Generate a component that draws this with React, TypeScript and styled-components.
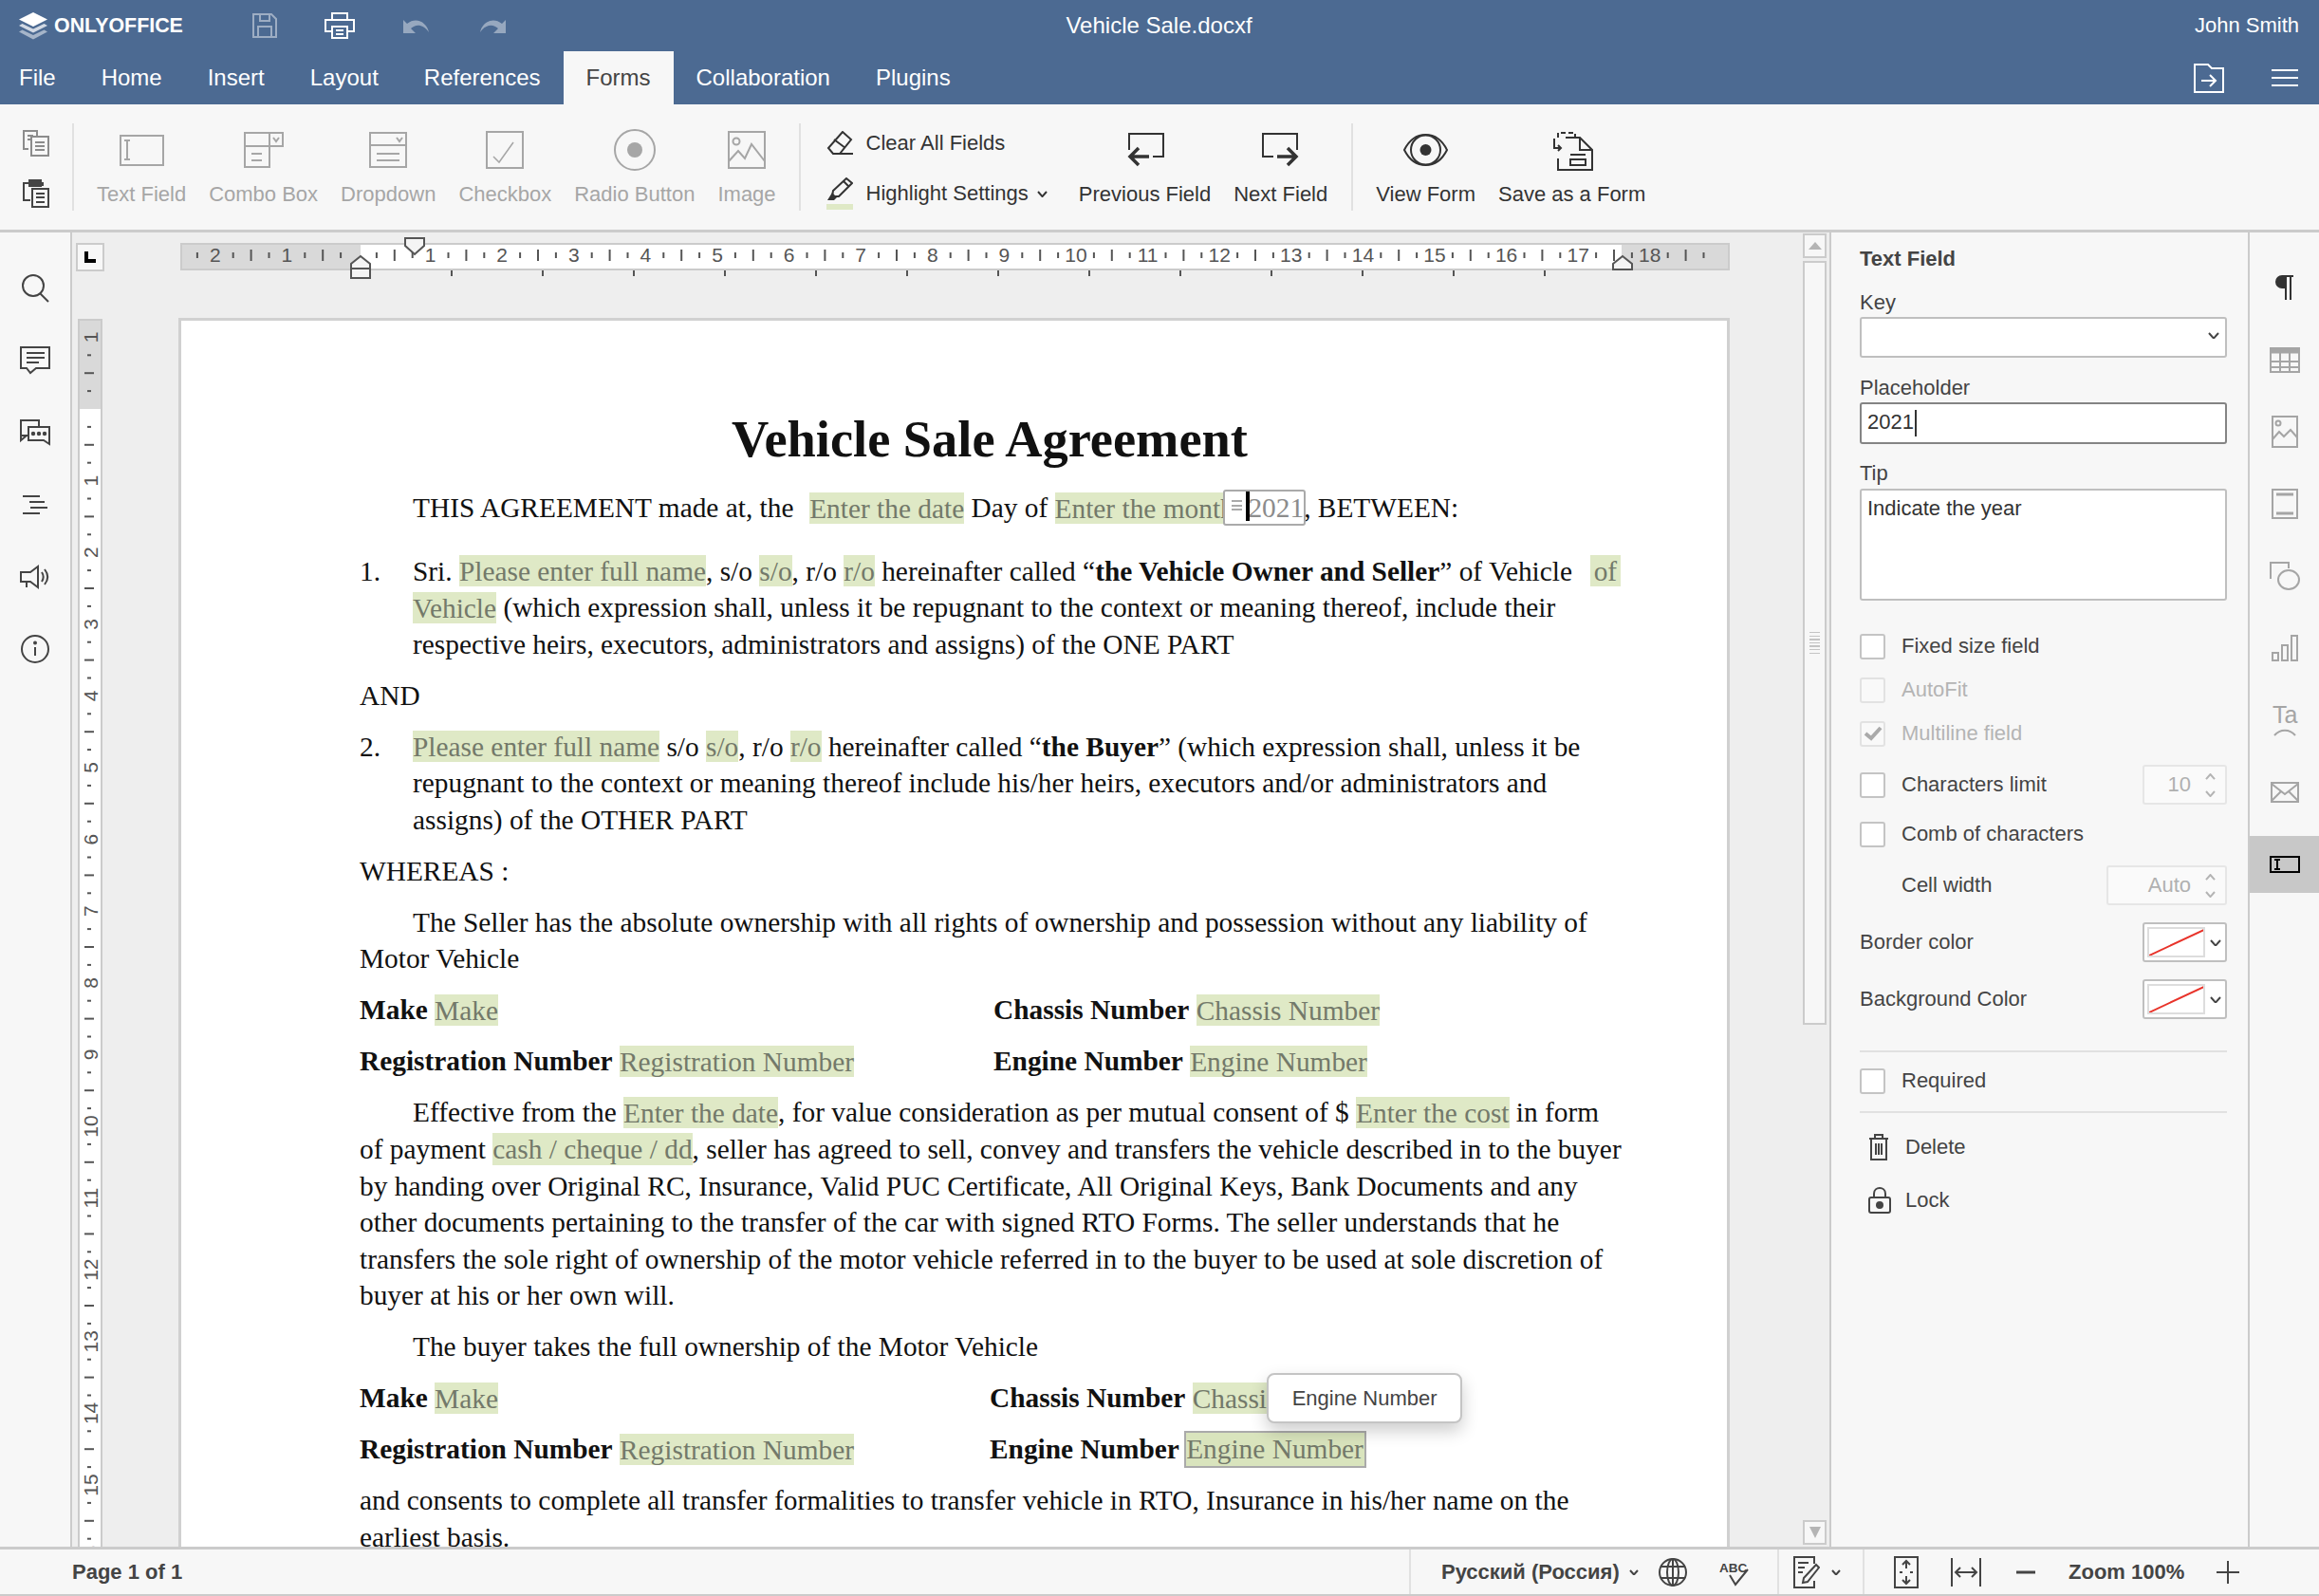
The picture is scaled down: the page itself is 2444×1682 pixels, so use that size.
import React from "react";
import styled, { createGlobalStyle } from "styled-components";

const GlobalStyle = createGlobalStyle`
  html, body { margin: 0; padding: 0; background: #f7f7f7; }
  body { font-family: "Liberation Sans", Arial, sans-serif; color: #444; }
  * { box-sizing: border-box; }
  svg { display: block; flex: none; }
`;

const Shell = styled.div`
  width: 2444px;
  height: 1682px;
  display: flex;
  flex-direction: column;
  overflow: hidden;
`;

/* ---- header ---- */

const TitleBar = styled.header`
  height: 54px;
  background: #4c6a92;
  color: #fff;
  display: grid;
  grid-template-columns: 1fr auto 1fr;
  align-items: center;
  padding: 0 21px 0 20px;
  font-size: 24px;
`;

const TitleLeft = styled.div`
  display: flex;
  align-items: center;
`;

const Brand = styled.span`
  font-weight: 700;
  font-size: 21.4px;
  margin: 0 26px 0 7px;
  width: 133px;
  white-space: nowrap;
`;

const QuickTools = styled.div`
  display: flex;
  align-items: center;
  margin-left: 50px;
  gap: 50px;
`;

const UserName = styled.div`
  justify-self: end;
  font-size: 22px;
`;

const TabBar = styled.nav`
  height: 56px;
  background: #4c6a92;
  display: flex;
  align-items: stretch;
  padding-left: 0;
`;

const Tab = styled.div<{ $active?: boolean }>`
  display: flex;
  align-items: center;
  padding: 0 24px;
  font-size: 24px;
  color: ${({ $active }) => ($active ? "#444" : "#fff")};
  background: ${({ $active }) => ($active ? "#f7f7f7" : "transparent")};
  &:first-child { padding-left: 20px; }
`;

const TabTools = styled.div`
  margin-left: auto;
  display: flex;
  align-items: center;
  gap: 50px;
  padding-right: 22px;
  color: #fff;
`;

/* ---- ribbon ---- */

const Ribbon = styled.section`
  height: 135px;
  flex: none;
  background: #f7f7f7;
  border-bottom: 3px solid #cbcbcb;
  display: flex;
  align-items: flex-start;
`;

const ClipColumn = styled.div`
  width: 76px;
  display: flex;
  flex-direction: column;
  align-items: center;
  gap: 24px;
  padding-top: 27px;
  color: #444;
`;

const RibbonSep = styled.div`
  width: 2px;
  height: 92px;
  margin-top: 20px;
  background: #e1e1e1;
`;

const RibbonGroup = styled.div<{ $pad: string; $gap: number }>`
  display: flex;
  padding: ${({ $pad }) => $pad};
  gap: ${({ $gap }) => $gap}px;
`;

const RibbonBtn = styled.div<{ $off?: boolean }>`
  display: flex;
  flex-direction: column;
  align-items: center;
  padding-top: 26px;
  color: ${({ $off }) => ($off ? "#a6a6a6" : "#333")};
`;

const RibbonIcon = styled.div`
  height: 44px;
  display: flex;
  align-items: center;
  justify-content: center;
`;

const RibbonLabel = styled.div`
  margin-top: 12px;
  font-size: 22px;
  line-height: 26px;
  white-space: nowrap;
`;

const StackColumn = styled.div`
  display: flex;
  flex-direction: column;
  padding-top: 26px;
  gap: 23px;
  margin-right: 9px;
`;

const StackRow = styled.div`
  display: flex;
  align-items: center;
  gap: 14px;
  font-size: 22px;
  height: 30px;
  color: #333;
  white-space: nowrap;
`;

const RowChevron = styled.div`
  margin-left: -5px;
`;

const IconCell = styled.div`
  width: 28px;
  display: flex;
  flex-direction: column;
  gap: 4px;
`;

const ColorStrip = styled.div`
  height: 6px;
  background: #dfe9c6;
`;

/* ---- workspace ---- */

const Workspace = styled.main`
  flex: 1;
  min-height: 0;
  display: flex;
`;

const Rail = styled.aside<{ $right?: boolean }>`
  flex: none;
  width: ${({ $right }) => ($right ? 75 : 76)}px;
  background: #f7f7f7;
  ${({ $right }) => ($right ? "border-left: 2px solid #cbcbcb;" : "border-right: 2px solid #cbcbcb;")}
  padding-top: ${({ $right }) => ($right ? 28 : 29)}px;
  display: flex;
  flex-direction: column;
`;

const RailBtn = styled.div<{ $active?: boolean; $dim?: boolean }>`
  height: 60px;
  margin-bottom: 16px;
  display: flex;
  align-items: center;
  justify-content: center;
  background: ${({ $active }) => ($active ? "#c8c8c8" : "transparent")};
  color: ${({ $dim }) => ($dim ? "#a5a5a5" : "#444")};
`;

const Canvas = styled.div`
  flex: 1;
  min-width: 0;
  background: #eee;
  display: grid;
  grid-template-columns: 112px 1635px 1fr;
  grid-template-rows: 90px minmax(0, 1fr);
  overflow: hidden;
`;

const Corner = styled.div`
  width: 30px;
  height: 30px;
  margin: 11px 0 0 4px;
  border: 2px solid #cbcbcb;
  background: #f7f7f7;
  display: flex;
  align-items: center;
  justify-content: center;
`;

const VRulerSlot = styled.div`
  padding: 1px 0 0 6px;
  overflow: hidden;
`;

const Page = styled.article`
  background: #fff;
  border: 3px solid #d0d0d0;
  border-bottom: 0;
  padding: 95px 113px 0 188px;
  font-family: "Liberation Serif", "Times New Roman", serif;
  font-size: 29.36px;
  line-height: 38.6px;
  color: #111;
  overflow: hidden;
  white-space: pre;
`;

const DocTitle = styled.h1`
  margin: 0 0 23.2px;
  font-size: 54.4px;
  line-height: 60px;
  font-weight: 700;
  text-align: center;
`;

const Para = styled.div<{ $after?: number }>`
  margin-bottom: ${({ $after }) => $after ?? 15.4}px;
`;

const Line = styled.div<{ $indent?: boolean }>`
  padding-left: ${({ $indent }) => ($indent ? 56 : 0)}px;
`;

const ListItem = styled.div`
  display: grid;
  grid-template-columns: 56px 1fr;
  margin-bottom: 15.4px;
`;

const FieldRow = styled.div<{ $col: number }>`
  display: grid;
  grid-template-columns: ${({ $col }) => $col}px 1fr;
  margin-bottom: 15.4px;
`;

const Ph = styled.span<{ $lead?: number; $pad?: number }>`
  background: #dfe9c6;
  color: #73796a;
  padding: 0.6px ${({ $pad }) => $pad ?? 0}px;
  margin-left: ${({ $lead }) => $lead ?? 0}px;
`;

const ActiveField = styled.span`
  position: relative;
`;

const ActiveFrame = styled.span`
  position: absolute;
  left: -26px;
  right: -2px;
  top: -3px;
  bottom: -3px;
  background: #fff;
  border: 2px solid #aaa;
  border-radius: 3px;
`;

const Grip = styled.span`
  position: absolute;
  left: 7px;
  top: 9px;
  width: 11px;
  height: 11px;
  background: repeating-linear-gradient(#aaa 0 2px, transparent 2px 4.5px);
`;

const ActiveText = styled.span`
  position: relative;
  color: #8c8c8c;
`;

const Caret = styled.span`
  position: absolute;
  left: -2px;
  top: -1px;
  bottom: 2px;
  width: 4px;
  background: #000;
`;

const SelectedField = styled.span`
  position: relative;
  background: #d9e4bd;
  color: #73796a;
  outline: 2px solid #aaa;
  padding: 1px 1px 2px 0;
`;

const Tip = styled.div`
  position: absolute;
  left: 85px;
  bottom: 100%;
  margin-bottom: 10px;
  height: 53px;
  padding: 0 24.5px;
  display: flex;
  align-items: center;
  background: #fff;
  border: 2px solid #c4c4c4;
  border-radius: 8px;
  box-shadow: 0 8px 18px rgba(0, 0, 0, 0.2);
  font-family: "Liberation Sans", Arial, sans-serif;
  font-size: 22px;
  color: #444;
`;

const ScrollColumn = styled.div`
  grid-column: 3;
  grid-row: 1 / span 2;
  width: 25px;
  margin-left: auto;
  margin-right: 3px;
  display: flex;
  flex-direction: column;
  padding: 1px 0 2px;
`;

const ScrollBtn = styled.div<{ $bottom?: boolean }>`
  height: 26px;
  flex: none;
  border: 2px solid #cbcbcb;
  background: #f7f7f7;
  display: flex;
  align-items: center;
  justify-content: center;
  margin-top: ${({ $bottom }) => ($bottom ? "auto" : "0")};
`;

const ScrollThumb = styled.div`
  height: 805px;
  margin-top: 3px;
  flex: none;
  border: 2px solid #cbcbcb;
  background: #f7f7f7;
  display: flex;
  align-items: center;
  justify-content: center;
`;

const ThumbGrip = styled.div`
  width: 11px;
  height: 24px;
  background: repeating-linear-gradient(#c4c4c4 0 1.5px, transparent 1.5px 3.6px);
`;

/* ---- settings panel ---- */

const Panel = styled.aside`
  flex: none;
  width: 441px;
  background: #f7f7f7;
  border-left: 2px solid #cbcbcb;
  padding: 15px 22px 0 30px;
  font-size: 22px;
  color: #444;
`;

const PanelTitle = styled.div`
  font-weight: 700;
  line-height: 26px;
`;

const FieldLabel = styled.div<{ $mt: number }>`
  margin-top: ${({ $mt }) => $mt}px;
  line-height: 26px;
`;

const TextBox = styled.div<{ $mt: number; $h: number; $focus?: boolean }>`
  margin-top: ${({ $mt }) => $mt}px;
  height: ${({ $h }) => $h}px;
  background: #fff;
  border: 2px solid ${({ $focus }) => ($focus ? "#848484" : "#bfbfbf")};
  border-radius: 3px;
  padding: 4px 6px;
  line-height: 30px;
  display: flex;
  align-items: flex-start;
  color: #333;
`;

const ComboChevron = styled.div`
  margin: 10px 0 0 auto;
  color: #444;
`;

const TextCaret = styled.span`
  width: 2px;
  height: 28px;
  margin: 2px 0 0 1px;
  background: #333;
`;

const CheckRow = styled.div<{ $mt: number; $h?: number; $off?: boolean }>`
  margin-top: ${({ $mt }) => $mt}px;
  height: ${({ $h }) => $h ?? 30}px;
  display: flex;
  align-items: center;
  color: ${({ $off }) => ($off ? "#b4b4b4" : "#444")};
`;

const CheckBox = styled.div<{ $off?: boolean }>`
  width: 27px;
  height: 27px;
  flex: none;
  margin-right: 17px;
  border: 2px solid ${({ $off }) => ($off ? "#e2e2e2" : "#c4c4c4")};
  border-radius: 3px;
  background: ${({ $off }) => ($off ? "#f9f9f9" : "#fff")};
  display: flex;
  align-items: center;
  justify-content: center;
`;

const LabelIndent = styled.span`
  padding-left: 44px;
`;

const SpinBox = styled.div<{ $w: number }>`
  margin-left: auto;
  width: ${({ $w }) => $w}px;
  height: 42px;
  border: 2px solid #e6e6e6;
  border-radius: 3px;
  background: #fafafa;
  color: #b0b0b0;
  display: flex;
  align-items: center;
  justify-content: flex-end;
  gap: 15px;
  padding-right: 10px;
`;

const SpinArrows = styled.div`
  display: flex;
  flex-direction: column;
  gap: 11px;
  color: #b4b4b4;
`;

const ColorRow = styled.div<{ $mt: number }>`
  margin-top: ${({ $mt }) => $mt}px;
  height: 42px;
  display: flex;
  align-items: center;
  justify-content: space-between;
`;

const ColorBtn = styled.div`
  width: 89px;
  height: 42px;
  border: 2px solid #bfbfbf;
  border-radius: 3px;
  background: #fff;
  padding: 3px 0 3px 3px;
  display: flex;
  align-items: center;
  gap: 5px;
`;

const Swatch = styled.div`
  width: 61px;
  height: 32px;
  border: 2px solid #ddd;
  flex: none;
  overflow: visible;
`;

const PanelRule = styled.div<{ $mt: number }>`
  margin-top: ${({ $mt }) => $mt}px;
  height: 2px;
  background: #e1e1e1;
`;

const ActionRow = styled.div<{ $mt: number }>`
  margin-top: ${({ $mt }) => $mt}px;
  height: 36px;
  display: flex;
  align-items: center;
  color: #444;
`;

const ActionIcon = styled.div`
  width: 48px;
  padding-left: 9px;
`;

/* ---- status bar ---- */

const StatusBar = styled.footer`
  height: 52px;
  flex: none;
  background: #f7f7f7;
  border-top: 3px solid #cbcbcb;
  border-bottom: 2px solid #cbcbcb;
  display: flex;
  align-items: stretch;
  font-size: 22px;
  font-weight: 700;
  color: #444;
`;

const PageCount = styled.div`
  width: 1485px;
  padding-left: 76px;
  display: flex;
  align-items: center;
`;

const StatusSection = styled.div<{ $w: number; $pad: number }>`
  width: ${({ $w }) => $w}px;
  padding-left: ${({ $pad }) => $pad}px;
  border-left: 2px solid #e1e1e1;
  display: flex;
  align-items: center;
  white-space: nowrap;
`;

const StatusItem = styled.div<{ $ml: number }>`
  margin-left: ${({ $ml }) => $ml}px;
`;

/* ---- drawings ---- */

const Ico: React.FC<{ w: number; h: number; sw?: number; children: React.ReactNode }> = ({ w, h, sw = 2, children }) => (
  <svg width={w} height={h} viewBox={`0 0 ${w} ${h}`} fill="none" stroke="currentColor" strokeWidth={sw}>
    {children}
  </svg>
);

const Chevron: React.FC<{ w?: number; up?: boolean; sw?: number }> = ({ w = 12, up, sw = 2 }) => (
  <Ico w={w} h={Math.round(w * 0.6)} sw={sw}>
    <path d={up ? `M1 ${w * 0.55} L${w / 2} 1 L${w - 1} ${w * 0.55}` : `M1 1 L${w / 2} ${w * 0.55} L${w - 1} 1`} />
  </Ico>
);

const LogoIcon = () => (
  <svg width="30" height="29" viewBox="0 0 30 29">
    <path d="M15 0 L30 7.5 L15 15 L0 7.5Z" fill="#fff" />
    <path d="M3.5 12 L0 14 L15 21.5 L30 14 L26.5 12 L15 17.5Z" fill="#fff" opacity=".75" />
    <path d="M3.5 18.5 L0 20.5 L15 28.5 L30 20.5 L26.5 18.5 L15 24Z" fill="#fff" opacity=".5" />
  </svg>
);

const SaveIcon = () => (
  <Ico w={26} h={26} sw={2}>
    <g opacity=".45">
      <path d="M1 1 H20 L25 6 V25 H1Z" />
      <path d="M6 25 V14 H20 V25 M8 1 V8 H18 V1" />
    </g>
  </Ico>
);

const PrintIcon = () => (
  <Ico w={32} h={28} sw={2}>
    <path d="M8 8 V1 H24 V8 M7 20 H1 V8 H31 V20 H25" />
    <path d="M8 15 H24 V27 H8Z M12 19 H20 M12 23 H20" />
  </Ico>
);

const UndoIcon: React.FC<{ flip?: boolean }> = ({ flip }) => (
  <svg width="30" height="16" viewBox="0 0 30 16" style={flip ? { transform: "scaleX(-1)" } : undefined}>
    <path d="M1 2 V16 H14 L9 11 C14 6 22 6 28 15 C26 5 15 -2 5 6Z" fill="#fff" opacity=".42" />
  </svg>
);

const OpenIcon = () => (
  <Ico w={32} h={32} sw={2}>
    <path d="M1 2 H15 L19 6 H31 V31 H1Z" />
    <path d="M8 19 H23 M17 13 L23 19 L17 25" />
  </Ico>
);

const BurgerIcon = () => (
  <Ico w={28} h={20} sw={2}>
    <path d="M0 2 H28 M0 10 H28 M0 18 H28" />
  </Ico>
);

const CopyIcon = () => (
  <Ico w={28} h={28} sw={2}>
    <g stroke="#8c8c8c">
      <path d="M6 20 H1 V1 H15 V6" />
      <path d="M5 6 H11 M5 10 H8" />
      <path d="M9 7 H27 V27 H9Z M13 13 H23 M13 17 H23 M13 21 H23" />
    </g>
  </Ico>
);

const PasteIcon = () => (
  <Ico w={28} h={30} sw={2}>
    <path d="M8 22 H1 V4 H7 M21 7 V4 H19" />
    <path d="M7 1 H19 V7 H7Z" fill="currentColor" />
    <path d="M10 10 H27 V29 H10Z M14 15 H23 M14 19 H23 M14 24 H23" />
  </Ico>
);

const TextFieldIcon = () => (
  <Ico w={47} h={33}>
    <rect x="1" y="1" width="45" height="31" />
    <path d="M5 6 H11 M8 6 V26 M5 26 H11" />
  </Ico>
);

const ComboIcon = () => (
  <Ico w={42} h={38}>
    <path d="M1 1 H41 V15 H27 V37 H1Z M1 15 H27 M27 1 V15" />
    <path d="M31 6 L34 10 L37 6" />
    <path d="M8 23 H19 M8 30 H19" />
  </Ico>
);

const DropdownIcon = () => (
  <Ico w={40} h={38}>
    <rect x="1" y="1" width="38" height="36" />
    <path d="M1 14 H39 M29 6 L32 10 L35 6" />
    <path d="M8 23 H32 M8 30 H32" />
  </Ico>
);

const CheckIcon = () => (
  <Ico w={40} h={40}>
    <rect x="1" y="1" width="38" height="38" />
    <path d="M8 27 L14 33 L29 12" strokeWidth="1.5" />
  </Ico>
);

const RadioIcon = () => (
  <Ico w={44} h={44}>
    <circle cx="22" cy="22" r="21" />
    <circle cx="22" cy="22" r="8" fill="currentColor" stroke="none" />
  </Ico>
);

const ImageIcon = () => (
  <Ico w={40} h={40}>
    <rect x="1" y="1" width="38" height="38" />
    <circle cx="9" cy="11" r="3.5" />
    <path d="M1 32 L11 21 L18 29 L25 14 L39 32" />
  </Ico>
);

const EraserIcon = () => (
  <Ico w={28} h={26} sw={2}>
    <path d="M17 1 L26 9 L14 24 H7 L2 18Z M8 9 L20 18 M7 24 H28" />
  </Ico>
);

const MarkerIcon = () => (
  <Ico w={28} h={24} sw={2}>
    <path d="M21 1 L27 6 L13 20 L6 20 L7 14Z M18 4 L24 10" />
    <path d="M1 24 L6 16 L11 21 L8 24Z" fill="currentColor" stroke="none" />
  </Ico>
);

const PrevIcon: React.FC<{ flip?: boolean }> = ({ flip }) => (
  <svg width="40" height="36" viewBox="0 0 40 36" fill="none" stroke="currentColor" strokeWidth="2" style={flip ? { transform: "scaleX(-1)" } : undefined}>
    <path d="M3 18 V1 H39 V25 H28" />
    <path d="M24 25 H6 M13 16 L4 25 L13 34" strokeWidth="3.5" />
  </svg>
);

const EyeIcon = () => (
  <Ico w={47} h={34}>
    <path d="M1 17 C6 7 13 1 23.5 1 C34 1 41 7 46 17 C41 27 34 33 23.5 33 C13 33 6 27 1 17Z" />
    <circle cx="23.5" cy="17" r="15.5" />
    <circle cx="23.5" cy="17" r="6" fill="currentColor" stroke="none" />
  </Ico>
);

const SaveFormIcon = () => (
  <Ico w={45} h={44}>
    <path d="M16 9 H31 L44 22 V43 H8 V31" />
    <path d="M31 9 V22 H44" />
    <path d="M8 9 V4 H26 V9" strokeDasharray="5 3" />
    <path d="M4 10 V20 H11 M8 17 L11 20 L8 23" />
    <rect x="21" y="32" width="16" height="6" />
    <path d="M21 27 H37" />
  </Ico>
);

const SearchIcon = () => (
  <Ico w={30} h={30} sw={2}>
    <circle cx="13" cy="12" r="11" />
    <path d="M20 20 L29 29" />
  </Ico>
);

const CommentIcon = () => (
  <Ico w={32} h={30} sw={2}>
    <path d="M1 1 H31 V23 H17 L11 28 L7 23 H1Z" />
    <path d="M7 7 H26 M7 12 H26 M7 17 H20" />
  </Ico>
);

const ChatIcon = () => (
  <Ico w={32} h={28} sw={2}>
    <path d="M8 17 H1 V1 H20 V8" />
    <path d="M1 17 V22 L7 17" />
    <path d="M9 8 H31 V26 L25 22 H9Z" />
    <circle cx="14" cy="15" r="1.2" fill="currentColor" />
    <circle cx="20" cy="15" r="1.2" fill="currentColor" />
    <circle cx="26" cy="15" r="1.2" fill="currentColor" />
  </Ico>
);

const NavIcon = () => (
  <Ico w={28} h={22} sw={2}>
    <path d="M1 2 H19 M8 8 H24 M9 14 H27 M1 20 H19" />
  </Ico>
);

const SpeakerIcon = () => (
  <Ico w={32} h={26} sw={2}>
    <path d="M1 8 H11 L19 2 V24 L11 18 H1Z M7 18 V24" />
    <path d="M23 8 C25 11 25 15 23 18 M26 5 C30 10 30 16 26 21" />
  </Ico>
);

const InfoIcon = () => (
  <Ico w={30} h={30} sw={2}>
    <circle cx="15" cy="15" r="14" />
    <path d="M15 13 V22" />
    <circle cx="15" cy="8.5" r="1" fill="currentColor" />
  </Ico>
);

const ParaIcon = () => (
  <svg width="20" height="26" viewBox="0 0 20 26">
    <path d="M7 0 H19 V2 H17 V26 H15 V2 H12 V26 H10 V14 H7 A7 7 0 0 1 7 0Z" fill="#333" />
  </svg>
);

const TableIcon = () => (
  <Ico w={32} h={27} sw={2}>
    <rect x="1" y="1" width="30" height="25" />
    <path d="M1 4 H31" strokeWidth="5" />
    <path d="M1 15 H31 M1 21 H31 M11 6 V26 M21 6 V26" />
  </Ico>
);

const RailImageIcon = () => (
  <Ico w={28} h={34} sw={2}>
    <rect x="1" y="1" width="26" height="32" />
    <circle cx="7" cy="8" r="2.5" />
    <path d="M1 25 L8 17 L13 22 L20 15 L27 23" />
  </Ico>
);

const HeaderIcon = () => (
  <Ico w={28} h={32} sw={2}>
    <rect x="1" y="1" width="26" height="30" />
    <path d="M5 6 H23 M5 26 H23" strokeWidth="3" />
  </Ico>
);

const ShapeIcon = () => (
  <Ico w={32} h={30} sw={2}>
    <path d="M1 18 V1 H20 V7" />
    <ellipse cx="20" cy="19" rx="11" ry="10" />
  </Ico>
);

const ChartIcon = () => (
  <Ico w={28} h={28} sw={2}>
    <rect x="1" y="19" width="6" height="8" />
    <rect x="11" y="11" width="6" height="16" />
    <rect x="21" y="1" width="6" height="26" />
  </Ico>
);

const ArtIcon = () => (
  <svg width="30" height="34" viewBox="0 0 30 34">
    <text x="2" y="20" fontFamily="Liberation Sans" fontSize="25" fill="#a5a5a5">Ta</text>
    <path d="M4 33 C10 26 20 26 26 33" fill="none" stroke="#a5a5a5" strokeWidth="2" />
  </svg>
);

const MailIcon = () => (
  <Ico w={30} h={22} sw={2}>
    <rect x="1" y="1" width="28" height="20" />
    <path d="M1 2 L15 13 L29 2 M1 20 L11 10 M29 20 L19 10" />
  </Ico>
);

const FieldIcon = () => (
  <svg width="32" height="18" viewBox="0 0 32 18" fill="none" stroke="#000" strokeWidth="2">
    <rect x="1" y="1" width="30" height="16" />
    <path d="M5 4 H11 M8 4 V14 M5 14 H11" strokeWidth="2" />
  </svg>
);

const CheckMark = () => (
  <svg width="20" height="16" viewBox="0 0 20 16" fill="none" stroke="#aaa" strokeWidth="4">
    <path d="M2 8 L8 13 L18 2" />
  </svg>
);

const NoColor = () => (
  <svg width="57" height="28" viewBox="0 0 57 28">
    <path d="M0 28 L60 0" stroke="#e8332a" strokeWidth="2" />
  </svg>
);

const TrashIcon = () => (
  <Ico w={22} h={28} sw={2}>
    <path d="M1 5 H21 M7 5 V1 H15 V5 M3 5 V27 H19 V5 M8 10 V22 M11 10 V22 M14 10 V22" />
  </Ico>
);

const LockIcon = () => (
  <Ico w={24} h={28} sw={2}>
    <rect x="1" y="11" width="22" height="16" rx="2" />
    <path d="M6 11 V7 C6 -1 18 -1 18 7 V11" />
    <circle cx="12" cy="19" r="3" fill="currentColor" />
  </Ico>
);

const TriUp = () => (
  <svg width="14" height="8" viewBox="0 0 14 8"><path d="M7 0 L14 8 H0Z" fill="#b4b4b4" /></svg>
);

const TriDown = () => (
  <svg width="12" height="12" viewBox="0 0 12 12"><path d="M0 0 H12 L6 12Z" fill="#b4b4b4" /></svg>
);

const LCorner = () => (
  <svg width="12" height="12" viewBox="0 0 12 12"><path d="M0 0 H4 V8 H12 V12 H0Z" fill="#000" /></svg>
);

const GlobeIcon = () => (
  <Ico w={30} h={30} sw={2}>
    <circle cx="15" cy="15" r="14" />
    <ellipse cx="15" cy="15" rx="6" ry="14" />
    <path d="M15 1 V29 M2 9 H28 M2 21 H28" />
  </Ico>
);

const SpellIcon = () => (
  <svg width="32" height="30" viewBox="0 0 32 30">
    <text x="0" y="15" fontFamily="Liberation Sans" fontSize="13.5" fontWeight="700" fill="#444">ABC</text>
    <path d="M11 18 L17 28 L30 12" fill="none" stroke="#444" strokeWidth="2" />
  </svg>
);

const TrackIcon = () => (
  <Ico w={28} h={34} sw={2}>
    <path d="M22 8 V1 H1 V33 H22 V26" />
    <path d="M5 7 H16 M5 12 H12 M5 17 H10" />
    <path d="M24 9 L27 12 L15 27 L10 28 L11 23Z" />
  </Ico>
);

const FitPageIcon = () => (
  <Ico w={26} h={34} sw={2}>
    <rect x="1" y="1" width="24" height="32" />
    <path d="M13 6 V13 M9 9 L13 5 L17 9 M13 21 V28 M9 25 L13 29 L17 25 M6 17 H9 M17 17 H20" />
  </Ico>
);

const FitWidthIcon = () => (
  <Ico w={32} h={30} sw={2}>
    <path d="M1 0 V30 M31 0 V30 M5 15 H27 M10 10 L5 15 L10 20 M22 10 L27 15 L22 20" />
  </Ico>
);

const MinusIcon = () => (
  <Ico w={20} h={4} sw={3}>
    <path d="M0 2 H20" />
  </Ico>
);

const PlusIcon = () => (
  <Ico w={24} h={24} sw={2}>
    <path d="M0 12 H24 M12 0 V24" />
  </Ico>
);

const CM = 75.6;

const HRuler = () => {
  const zero = 190;
  const marks: React.ReactNode[] = [];
  for (let n = -2; n <= 18; n++) {
    const x = zero + n * CM;
    if (n !== 0) {
      marks.push(
        <text key={`n${n}`} x={x} y={31} textAnchor="middle" fontFamily="Liberation Sans" fontSize="21" fill="#555">
          {Math.abs(n)}
        </text>
      );
    }
    [0.25, 0.5, 0.75].forEach((f) => {
      const tx = x + f * CM;
      const long = f === 0.5;
      marks.push(
        <path key={`t${n}${f}`} d={`M${tx} ${long ? 18 : 21} V${long ? 30 : 27}`} stroke="#555" strokeWidth="2" />
      );
    });
    if (n === -2) {
      marks.push(<path key="t-first" d={`M${x - 0.25 * CM} 21 V27`} stroke="#555" strokeWidth="2" />);
    }
  }
  const tabs: React.ReactNode[] = [];
  for (let x = 288; x <= 1440; x += 96) {
    tabs.push(<path key={x} d={`M${x} 40 V46`} stroke="#555" strokeWidth="2" />);
  }
  return (
    <svg width="1635" height="90" viewBox="0 0 1635 90" fill="none">
      <rect x="3" y="12" width="1631" height="27" fill="#d9d9d9" stroke="#cbcbcb" strokeWidth="2" />
      <rect x="192" y="13" width="1329" height="25" fill="#fff" />
      {marks}
      {tabs}
      <path d="M239 6 H259 V14 L249 23 L239 14Z" fill="#f4f4f4" stroke="#555" strokeWidth="2" />
      <path d="M182 48 V33 L192 25 L202 33 V48Z M182 38 H202" fill="#f4f4f4" stroke="#555" strokeWidth="2" />
      <path d="M1512 39 V33 L1522 25 L1532 33 V39Z" fill="#f4f4f4" stroke="#555" strokeWidth="2" />
    </svg>
  );
};

const VRuler = () => {
  const zero = 95;
  const marks: React.ReactNode[] = [];
  for (let n = -1; n <= 16; n++) {
    const y = zero + n * CM;
    if (n !== 0) {
      marks.push(
        <text
          key={`n${n}`}
          x={0}
          y={0}
          transform={`translate(21 ${y}) rotate(-90)`}
          textAnchor="middle"
          fontFamily="Liberation Sans"
          fontSize="21"
          fill="#555"
        >
          {Math.abs(n)}
        </text>
      );
    }
    [0.25, 0.5, 0.75].forEach((f) => {
      const ty = y + f * CM;
      const long = f === 0.5;
      marks.push(
        <path key={`t${n}${f}`} d={`M${long ? 7 : 10} ${ty} H${long ? 17 : 14}`} stroke="#555" strokeWidth="2" />
      );
    });
  }
  return (
    <svg width="26" height="1300" viewBox="0 0 26 1300" fill="none">
      <rect x="1" y="1" width="24" height="1298" fill="#fff" stroke="#cbcbcb" strokeWidth="2" />
      <rect x="2" y="2" width="22" height="93" fill="#d9d9d9" />
      {marks}
    </svg>
  );
};

const App = () => (
  <>
    <GlobalStyle />
    <Shell>
      <TitleBar>
        <TitleLeft>
          <LogoIcon />
          <Brand>ONLYOFFICE</Brand>
          <QuickTools>
            <SaveIcon />
            <PrintIcon />
            <UndoIcon />
            <UndoIcon flip />
          </QuickTools>
        </TitleLeft>
        <div>Vehicle Sale.docxf</div>
        <UserName>John Smith</UserName>
      </TitleBar>

      <TabBar>
        <Tab>File</Tab>
        <Tab>Home</Tab>
        <Tab>Insert</Tab>
        <Tab>Layout</Tab>
        <Tab>References</Tab>
        <Tab $active>Forms</Tab>
        <Tab>Collaboration</Tab>
        <Tab>Plugins</Tab>
        <TabTools>
          <OpenIcon />
          <BurgerIcon />
        </TabTools>
      </TabBar>

      <Ribbon>
        <ClipColumn>
          <CopyIcon />
          <PasteIcon />
        </ClipColumn>
        <RibbonSep />
        <RibbonGroup $pad="0 24px" $gap={24}>
          <RibbonBtn $off><RibbonIcon><TextFieldIcon /></RibbonIcon><RibbonLabel>Text Field</RibbonLabel></RibbonBtn>
          <RibbonBtn $off><RibbonIcon><ComboIcon /></RibbonIcon><RibbonLabel>Combo Box</RibbonLabel></RibbonBtn>
          <RibbonBtn $off><RibbonIcon><DropdownIcon /></RibbonIcon><RibbonLabel>Dropdown</RibbonLabel></RibbonBtn>
          <RibbonBtn $off><RibbonIcon><CheckIcon /></RibbonIcon><RibbonLabel>Checkbox</RibbonLabel></RibbonBtn>
          <RibbonBtn $off><RibbonIcon><RadioIcon /></RibbonIcon><RibbonLabel>Radio Button</RibbonLabel></RibbonBtn>
          <RibbonBtn $off><RibbonIcon><ImageIcon /></RibbonIcon><RibbonLabel>Image</RibbonLabel></RibbonBtn>
        </RibbonGroup>
        <RibbonSep />
        <RibbonGroup $pad="0 25px 0 27px" $gap={24}>
          <StackColumn>
            <StackRow>
              <IconCell><EraserIcon /></IconCell>
              Clear All Fields
            </StackRow>
            <StackRow>
              <IconCell><MarkerIcon /><ColorStrip /></IconCell>
              Highlight Settings
              <RowChevron><Chevron w={11} /></RowChevron>
            </StackRow>
          </StackColumn>
          <RibbonBtn><RibbonIcon><PrevIcon /></RibbonIcon><RibbonLabel>Previous Field</RibbonLabel></RibbonBtn>
          <RibbonBtn><RibbonIcon><PrevIcon flip /></RibbonIcon><RibbonLabel>Next Field</RibbonLabel></RibbonBtn>
        </RibbonGroup>
        <RibbonSep />
        <RibbonGroup $pad="0 24px" $gap={24}>
          <RibbonBtn><RibbonIcon><EyeIcon /></RibbonIcon><RibbonLabel>View Form</RibbonLabel></RibbonBtn>
          <RibbonBtn><RibbonIcon><SaveFormIcon /></RibbonIcon><RibbonLabel>Save as a Form</RibbonLabel></RibbonBtn>
        </RibbonGroup>
      </Ribbon>

      <Workspace>
        <Rail>
          <RailBtn><SearchIcon /></RailBtn>
          <RailBtn><CommentIcon /></RailBtn>
          <RailBtn><ChatIcon /></RailBtn>
          <RailBtn><NavIcon /></RailBtn>
          <RailBtn><SpeakerIcon /></RailBtn>
          <RailBtn><InfoIcon /></RailBtn>
        </Rail>

        <Canvas>
          <Corner><LCorner /></Corner>
          <HRuler />
          <VRulerSlot><VRuler /></VRulerSlot>
          <Page>
            <DocTitle>Vehicle Sale Agreement</DocTitle>
            <Para $after={27.8}>
              <Line $indent>
                {"THIS AGREEMENT made at, the  "}<Ph $lead={2}>Enter the date</Ph>{" Day of "}<Ph>Enter the month</Ph>{"  "}
                <ActiveField>
                  <ActiveFrame><Grip /></ActiveFrame>
                  <ActiveText>2021</ActiveText>
                  <Caret />
                </ActiveField>
                {", BETWEEN:"}
              </Line>
            </Para>
            <ListItem>
              <span>1.</span>
              <div>
                <Line>
                  {"Sri. "}<Ph>Please enter full name</Ph>{", s/o "}<Ph>s/o</Ph>{", r/o "}<Ph>r/o</Ph>{" hereinafter called “"}
                  <strong>the Vehicle Owner and Seller</strong>{"” of Vehicle  "}<Ph $lead={4} $pad={4}>of</Ph>
                </Line>
                <Line><Ph>Vehicle</Ph>{" (which expression shall, unless it be repugnant to the context or meaning thereof, include their"}</Line>
                <Line>respective heirs, executors, administrators and assigns) of the ONE PART</Line>
              </div>
            </ListItem>
            <Para>AND</Para>
            <ListItem>
              <span>2.</span>
              <div>
                <Line>
                  <Ph>Please enter full name</Ph>{" s/o "}<Ph>s/o</Ph>{", r/o "}<Ph>r/o</Ph>{" hereinafter called “"}
                  <strong>the Buyer</strong>{"” (which expression shall, unless it be"}
                </Line>
                <Line>repugnant to the context or meaning thereof include his/her heirs, executors and/or administrators and</Line>
                <Line>assigns) of the OTHER PART</Line>
              </div>
            </ListItem>
            <Para>WHEREAS :</Para>
            <Para>
              <Line $indent>The Seller has the absolute ownership with all rights of ownership and possession without any liability of</Line>
              <Line>Motor Vehicle</Line>
            </Para>
            <FieldRow $col={668}>
              <div><strong>Make</strong>{" "}<Ph>Make</Ph></div>
              <div><strong>Chassis Number</strong>{" "}<Ph>Chassis Number</Ph></div>
            </FieldRow>
            <FieldRow $col={668}>
              <div><strong>Registration Number</strong>{" "}<Ph>Registration Number</Ph></div>
              <div><strong>Engine Number</strong>{" "}<Ph>Engine Number</Ph></div>
            </FieldRow>
            <Para>
              <Line $indent>{"Effective from the "}<Ph>Enter the date</Ph>{", for value consideration as per mutual consent of $ "}<Ph>Enter the cost</Ph>{" in form"}</Line>
              <Line>{"of payment "}<Ph>cash / cheque / dd</Ph>{", seller has agreed to sell, convey and transfers the vehicle described in to the buyer"}</Line>
              <Line>by handing over Original RC, Insurance, Valid PUC Certificate, All Original Keys, Bank Documents and any</Line>
              <Line>other documents pertaining to the transfer of the car with signed RTO Forms. The seller understands that he</Line>
              <Line>transfers the sole right of ownership of the motor vehicle referred in to the buyer to be used at sole discretion of</Line>
              <Line>buyer at his or her own will.</Line>
            </Para>
            <Para><Line $indent>The buyer takes the full ownership of the Motor Vehicle</Line></Para>
            <FieldRow $col={664}>
              <div><strong>Make</strong>{" "}<Ph>Make</Ph></div>
              <div><strong>Chassis Number</strong>{" "}<Ph>Chassis Number</Ph></div>
            </FieldRow>
            <FieldRow $col={664}>
              <div><strong>Registration Number</strong>{" "}<Ph>Registration Number</Ph></div>
              <div>
                <strong>Engine Number</strong>{" "}
                <SelectedField>
                  Engine Number
                  <Tip>Engine Number</Tip>
                </SelectedField>
              </div>
            </FieldRow>
            <Para>
              <Line>and consents to complete all transfer formalities to transfer vehicle in RTO, Insurance in his/her name on the</Line>
              <Line>earliest basis.</Line>
            </Para>
          </Page>
          <ScrollColumn>
            <ScrollBtn><TriUp /></ScrollBtn>
            <ScrollThumb><ThumbGrip /></ScrollThumb>
            <ScrollBtn $bottom><TriDown /></ScrollBtn>
          </ScrollColumn>
        </Canvas>

        <Panel>
          <PanelTitle>Text Field</PanelTitle>
          <FieldLabel $mt={20}>Key</FieldLabel>
          <TextBox $mt={2} $h={43}><ComboChevron><Chevron w={12} /></ComboChevron></TextBox>
          <FieldLabel $mt={19}>Placeholder</FieldLabel>
          <TextBox $mt={2} $h={44} $focus>2021<TextCaret /></TextBox>
          <FieldLabel $mt={18}>Tip</FieldLabel>
          <TextBox $mt={3} $h={118}>Indicate the year</TextBox>
          <CheckRow $mt={33}><CheckBox />Fixed size field</CheckRow>
          <CheckRow $mt={16} $off><CheckBox $off />AutoFit</CheckRow>
          <CheckRow $mt={16} $off><CheckBox $off><CheckMark /></CheckBox>Multiline field</CheckRow>
          <CheckRow $mt={18} $h={42}>
            <CheckBox />Characters limit
            <SpinBox $w={89}>
              10
              <SpinArrows><Chevron w={11} up /><Chevron w={11} /></SpinArrows>
            </SpinBox>
          </CheckRow>
          <CheckRow $mt={16}><CheckBox />Comb of characters</CheckRow>
          <CheckRow $mt={18} $h={42}>
            <LabelIndent>Cell width</LabelIndent>
            <SpinBox $w={127}>
              Auto
              <SpinArrows><Chevron w={11} up /><Chevron w={11} /></SpinArrows>
            </SpinBox>
          </CheckRow>
          <ColorRow $mt={18}>
            Border color
            <ColorBtn><Swatch><NoColor /></Swatch><Chevron w={12} /></ColorBtn>
          </ColorRow>
          <ColorRow $mt={18}>
            Background Color
            <ColorBtn><Swatch><NoColor /></Swatch><Chevron w={12} /></ColorBtn>
          </ColorRow>
          <PanelRule $mt={33} />
          <CheckRow $mt={15}><CheckBox />Required</CheckRow>
          <PanelRule $mt={17} />
          <ActionRow $mt={18}><ActionIcon><TrashIcon /></ActionIcon>Delete</ActionRow>
          <ActionRow $mt={20}><ActionIcon><LockIcon /></ActionIcon>Lock</ActionRow>
        </Panel>

        <Rail $right>
          <RailBtn><ParaIcon /></RailBtn>
          <RailBtn $dim><TableIcon /></RailBtn>
          <RailBtn $dim><RailImageIcon /></RailBtn>
          <RailBtn $dim><HeaderIcon /></RailBtn>
          <RailBtn $dim><ShapeIcon /></RailBtn>
          <RailBtn $dim><ChartIcon /></RailBtn>
          <RailBtn $dim><ArtIcon /></RailBtn>
          <RailBtn $dim><MailIcon /></RailBtn>
          <RailBtn $active><FieldIcon /></RailBtn>
        </Rail>
      </Workspace>

      <StatusBar>
        <PageCount>Page 1 of 1</PageCount>
        <StatusSection $w={388} $pad={32}>
          Русский (Россия)
          <StatusItem $ml={10}><Chevron w={10} /></StatusItem>
          <StatusItem $ml={21}><GlobeIcon /></StatusItem>
          <StatusItem $ml={34}><SpellIcon /></StatusItem>
        </StatusSection>
        <StatusSection $w={90} $pad={15}>
          <TrackIcon />
          <StatusItem $ml={12}><Chevron w={10} /></StatusItem>
        </StatusSection>
        <StatusSection $w={481} $pad={31}>
          <FitPageIcon />
          <StatusItem $ml={34}><FitWidthIcon /></StatusItem>
          <StatusItem $ml={37}><MinusIcon /></StatusItem>
          <StatusItem $ml={35}>Zoom 100%</StatusItem>
          <StatusItem $ml={34}><PlusIcon /></StatusItem>
        </StatusSection>
      </StatusBar>
    </Shell>
  </>
);

export default App;
